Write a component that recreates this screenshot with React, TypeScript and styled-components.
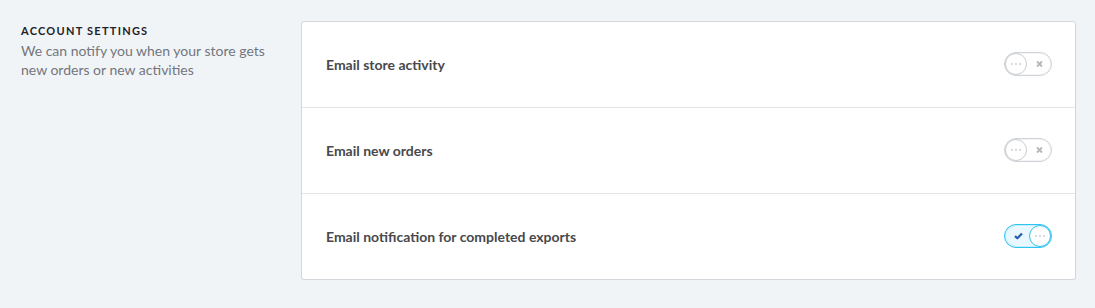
import React, { useState } from "react";
import styled, { createGlobalStyle } from "styled-components";

const GlobalStyle = createGlobalStyle`
  html, body { margin: 0; padding: 0; background: #f1f4f7; }
  body { font-family: Lato, "Open Sans", sans-serif; -webkit-font-smoothing: antialiased; }
`;

const Page = styled.div`
  display: grid;
  grid-template-columns: 280px 775px;
  padding: 21px 0 0 21px;
`;

const Intro = styled.div`
  padding-top: 3px;
`;

const Heading = styled.h2`
  margin: 0;
  font-size: 11px;
  font-weight: 700;
  letter-spacing: 1.25px;
  color: #1f2329;
  text-transform: uppercase;
  line-height: 14px;
`;

const Description = styled.p`
  margin: 3px 0 0;
  font-size: 14px;
  line-height: 19px;
  color: #72767e;
  width: 260px;
`;

const Card = styled.div`
  background: #fff;
  border: 1px solid #d3d7dc;
  border-radius: 3px;
  box-shadow: 0 1px 1px rgba(0, 0, 0, 0.06);
  width: 773px;
`;

const Row = styled.div`
  display: flex;
  align-items: center;
  justify-content: space-between;
  height: 85px;
  padding: 0 23px 1px 24px;
  box-sizing: border-box;
  & + & {
    height: 86px;
    border-top: 1px solid #e1e4e8;
  }
`;

const Label = styled.span`
  font-size: 14px;
  font-weight: 700;
  color: #48494c;
`;

const Track = styled.button<{ $on: boolean }>`
  position: relative;
  width: 48px;
  height: 24px;
  padding: 0;
  border-radius: 12px;
  cursor: pointer;
  border: 1px solid ${(p) => (p.$on ? "#2fc3f2" : "#cfd2d6")};
  background: ${(p) => (p.$on ? "#e9f8fe" : "#fff")};
  box-shadow: inset 0 0 0 1px ${(p) => (p.$on ? "#c4effc" : "#f3f4f5")};
`;

const Knob = styled.span<{ $on: boolean }>`
  position: absolute;
  top: 0;
  left: ${(p) => (p.$on ? "24px" : "0")};
  width: 20px;
  height: 20px;
  border-radius: 50%;
  background: #fff;
  border: 1px solid ${(p) => (p.$on ? "#2fc3f2" : "#c9ccd0")};
  display: flex;
  align-items: center;
  justify-content: center;
  gap: 2px;
`;

const Dot = styled.i`
  display: block;
  width: 2px;
  height: 2px;
  border-radius: 50%;
  background: #ccced2;
`;

const Mark = styled.span<{ $on: boolean }>`
  position: absolute;
  top: 50%;
  transform: translateY(-50%);
  left: ${(p) => (p.$on ? "9px" : "31px")};
  display: flex;
`;

function Toggle({ on, onClick }: { on: boolean; onClick: () => void }) {
  return (
    <Track $on={on} onClick={onClick} aria-pressed={on}>
      <Mark $on={on}>
        {on ? (
          <svg width="9" height="7" viewBox="0 0 9 7">
            <path d="M1 3.6 L3.4 5.8 L8 1" fill="none" stroke="#245fae" strokeWidth="2.2" />
          </svg>
        ) : (
          <svg width="7" height="7" viewBox="0 0 7 7">
            <path d="M1 1 L6 6 M6 1 L1 6" fill="none" stroke="#b4b7bb" strokeWidth="1.8" />
          </svg>
        )}
      </Mark>
      <Knob $on={on}>
        <Dot />
        <Dot />
        <Dot />
      </Knob>
    </Track>
  );
}

export default function App() {
  const [state, setState] = useState([false, false, true]);
  const labels = [
    "Email store activity",
    "Email new orders",
    "Email notification for completed exports",
  ];
  return (
    <>
      <GlobalStyle />
      <Page>
        <Intro>
          <Heading>Account Settings</Heading>
          <Description>
            We can notify you when your store gets new orders or new activities
          </Description>
        </Intro>
        <Card>
          {labels.map((l, i) => (
            <Row key={l}>
              <Label>{l}</Label>
              <Toggle
                on={state[i]}
                onClick={() => setState((s) => s.map((v, j) => (j === i ? !v : v)))}
              />
            </Row>
          ))}
        </Card>
      </Page>
    </>
  );
}
